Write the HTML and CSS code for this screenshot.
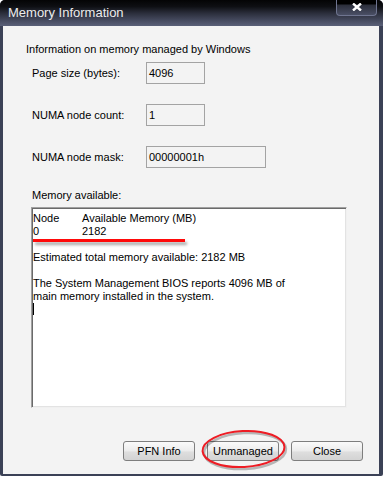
FILE: index.html
```html
<!DOCTYPE html>
<html lang="en">
<head>
  <meta charset="UTF-8" />
  <title>Memory Information</title>
  <link rel="stylesheet" href="styles.css">
</head>
<body>
  <div class="window">
    <div class="titlebar">
      <span class="title">Memory Information</span>
      <span class="close-btn">
        <svg width="10" height="8" viewBox="0 0 10 8"><path d="M1 0.5 L9 7.5 M9 0.5 L1 7.5" stroke="#fff" stroke-width="2.4" fill="none"/></svg>
      </span>
    </div>

    <div class="client">
      <p class="intro">Information on memory managed by Windows</p>

      <div class="field">
        <label>Page size (bytes):</label>
        <div class="box">4096</div>
      </div>
      <div class="field">
        <label>NUMA node count:</label>
        <div class="box">1</div>
      </div>
      <div class="field">
        <label>NUMA node mask:</label>
        <div class="box wide">00000001h</div>
      </div>

      <div class="mem-label">Memory available:</div>
      <div class="memo">
        <div class="row"><span class="col">Node</span>Available Memory (MB)</div>
        <div class="row"><span class="col">0</span>2182</div>
        <div class="row">&nbsp;</div>
        <div class="row">Estimated total memory available: 2182 MB</div>
        <div class="row">&nbsp;</div>
        <div class="row">The System Management BIOS reports 4096 MB of</div>
        <div class="row">main memory installed in the system.</div>
        <div class="row"><span class="caret"></span></div>
        <span class="underline"></span>
      </div>

      <div class="buttons">
        <button>PFN Info</button>
        <span class="marked">
          <button>Unmanaged</button>
          <svg class="circle" width="92" height="44" viewBox="0 0 92 44">
            <ellipse cx="46" cy="23" rx="41" ry="18" transform="rotate(-3 46 23)" fill="none" stroke="rgba(0,0,0,0.25)" stroke-width="2.5"/>
            <ellipse cx="44.5" cy="21" rx="41" ry="18" transform="rotate(-3 44.5 21)" fill="none" stroke="#ee1c24" stroke-width="2"/>
          </svg>
        </span>
        <button>Close</button>
      </div>
    </div>
  </div>
</body>
</html>
```

FILE: styles.css
```css
body {
  margin: 0;
  background: #ffffff;
  font-family: 'Liberation Sans', Arial, sans-serif;
  font-size: 11px;
  color: #000;
}
.window {
  width: 383px;
  height: 476px;
  box-sizing: border-box;
  background: #3b4156;
  border-radius: 5px 5px 2px 2px;
  padding: 0 4px 2px 3px;
  display: flex;
  flex-direction: column;
}
.titlebar {
  height: 26px;
  margin: 0 -4px 0 -3px;
  padding: 0 6px 0 8px;
  border-radius: 5px 5px 0 0;
  background: linear-gradient(#040405 0%, #0e0f13 25%, #2a2d3a 50%, #474c61 80%, #5a6078 100%);
  display: flex;
  justify-content: space-between;
  align-items: flex-start;
}
.title {
  color: #ececec;
  font-size: 13px;
  line-height: 13px;
  margin-top: 6px;
}
.close-btn {
  width: 41px;
  height: 16px;
  box-sizing: border-box;
  border: 1px solid #6f7590;
  border-top: none;
  border-radius: 0 0 4px 4px;
  background: linear-gradient(#000 0%, #000 25%, #2c2f3b 35%, #4a4f65 100%);
  display: flex;
  align-items: center;
  justify-content: center;
  padding-bottom: 1px;
}
.close-btn svg {
  display: block;
}
.client {
  flex: 1;
  background: #f3f3f3;
  padding: 17px 0 0 29px;
  display: flex;
  flex-direction: column;
  position: relative;
}
.intro {
  margin: 0 0 6px -6px;
  line-height: 13px;
}
.field {
  display: flex;
  align-items: center;
  height: 22px;
  margin-bottom: 20px;
}
.field label {
  width: 114px;
  line-height: 13px;
}
.box {
  width: 59px;
  height: 22px;
  box-sizing: border-box;
  border: 1px solid #a3a3a3;
  padding: 4px 0 0 2px;
  line-height: 13px;
}
.box.wide {
  width: 120px;
}
.mem-label {
  margin-top: 1px;
  line-height: 13px;
  margin-bottom: 5px;
}
.memo {
  position: relative;
  width: 316px;
  height: 201px;
  box-sizing: border-box;
  background: #fff;
  border: 1px solid;
  border-color: #a0a0a0 #f0f0f0 #f0f0f0 #a0a0a0;
  box-shadow: inset 1px 1px 0 #6a6a6a, inset -1px -1px 0 #e3e3e3;
  padding: 4px 0 0 1px;
  margin-left: -1px;
}
.row {
  line-height: 13px;
  height: 13px;
  white-space: nowrap;
}
.col {
  display: inline-block;
  width: 49px;
}
.caret {
  display: inline-block;
  width: 1px;
  height: 12px;
  background: #000;
  vertical-align: top;
}
.underline {
  position: absolute;
  left: 1px;
  top: 31px;
  width: 152px;
  height: 3px;
  background: #ff0a0a;
  box-shadow: 2px 3px 3px rgba(0, 0, 0, 0.35);
}
.buttons {
  margin-top: 33px;
  display: flex;
  justify-content: flex-end;
  gap: 12px;
  padding-right: 16px;
}
button {
  width: 72px;
  height: 20px;
  font-family: 'Liberation Sans', Arial, sans-serif;
  font-size: 11px;
  color: #000;
  border: 1px solid #7e7e7e;
  border-radius: 3px;
  background: linear-gradient(#fafafa 0%, #ececec 50%, #dedede 55%, #d3d3d3 100%);
  padding: 0;
  display: block;
}
.marked {
  position: relative;
}
.circle {
  position: absolute;
  left: -8px;
  top: -13px;
}
```
